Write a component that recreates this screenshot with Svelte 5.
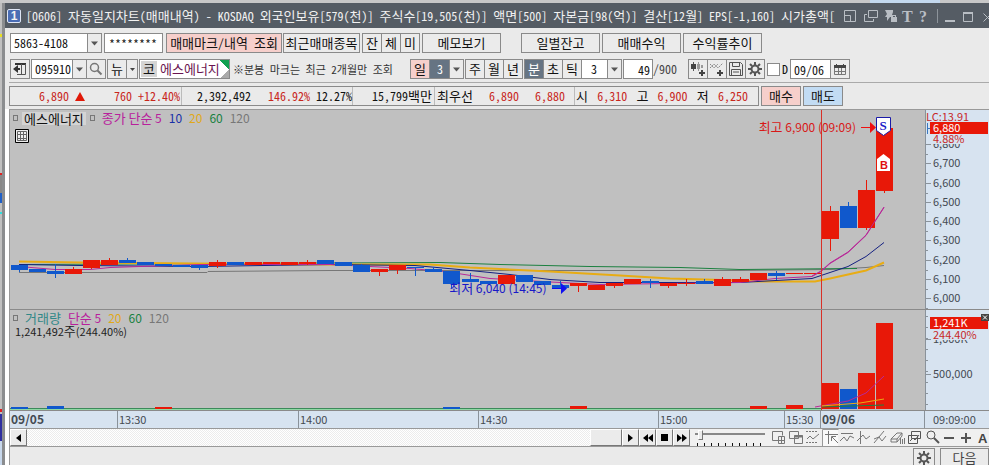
<script lang="ts">
	type Candle = [dir: "up" | "down", top: number, bottom: number, high: number, low: number];

	let account = "5863-4108";
	let password = "********";
	let code = "095910";
	let dayStep = "3";
	let tickStep = "3";
	let count = "49";
	let useDate = false;
	let date = "09/06";
	let speed = 5;

	const title =
		"[0606] 자동일지차트(매매내역) - KOSDAQ 외국인보유[579(천)] 주식수[19,505(천)] 액면[500] 자본금[98(억)] 결산[12월] EPS[-1,160] 시가총액[";

	// body top, body bottom, wick top, wick bottom
	const candles: Candle[] = [
		["down", 265, 270, 265, 272],
		["down", 269, 272, 269, 272],
		["down", 271, 274, 264, 278],
		["up", 269, 274, 267, 274],
		["up", 260, 268, 260, 269],
		["up", 260, 265, 258, 265],
		["down", 260, 263, 258, 263],
		["down", 262, 265, 262, 265],
		["down", 264, 266, 264, 266],
		["down", 265, 267, 265, 267],
		["down", 265, 268, 265, 270],
		["up", 262, 266, 260, 268],
		["down", 262, 265, 262, 265],
		["up", 262, 265, 262, 265],
		["up", 262, 264, 262, 264],
		["up", 262, 265, 262, 265],
		["up", 262, 264, 260, 265],
		["down", 260, 264, 260, 264],
		["down", 262, 266, 262, 266],
		["down", 265, 272, 264, 272],
		["up", 269, 272, 269, 276],
		["up", 265, 270, 265, 274],
		["down", 267, 268, 267, 276],
		["down", 269, 272, 267, 272],
		["down", 271, 284, 271, 288],
		["down", 279, 282, 273, 282],
		["down", 281, 284, 281, 284],
		["up", 275, 284, 275, 284],
		["down", 275, 282, 275, 282],
		["down", 281, 285, 281, 285],
		["down", 285, 288, 281, 288],
		["up", 283, 286, 283, 292],
		["up", 285, 290, 285, 290],
		["up", 283, 286, 283, 288],
		["up", 279, 284, 279, 284],
		["down", 281, 283, 279, 288],
		["up", 283, 286, 283, 288],
		["up", 283, 284, 279, 286],
		["down", 281, 284, 279, 284],
		["up", 279, 286, 277, 286],
		["up", 279, 282, 277, 282],
		["up", 273, 280, 273, 280],
		["down", 273, 276, 271, 280],
		["up", 273, 274, 273, 274],
		["up", 273, 274, 273, 274],
		["up", 211, 239, 206, 251],
		["down", 206, 228, 202, 228],
		["up", 190, 228, 180, 230],
		["up", 128, 191, 128, 193],
	];

	const averages = [
		{
			name: "ma120",
			points: "19,272 207,272 208,271 330,270 740,270 830,269 866,267 884,265",
		},
		{ name: "ma60", points: "19,264 440,262 500,264 590,266 680,267 740,269 857,268" },
		{
			name: "ma20",
			points:
				"19,261 80,262 330,264 430,264 470,267 550,271 620,275 670,278 740,280 758,281 815,281 830,278 848,274 866,270 884,262",
		},
		{
			name: "ma10",
			points:
				"19,264 80,265 200,266 330,264 415,265 470,270 510,274 550,279 600,282 740,282 812,278 830,272 848,266 866,256 884,242",
		},
		{
			name: "ma5",
			points:
				"19,266 55,269 90,269 110,267 200,264 330,264 370,266 410,268 445,271 490,278 560,282 600,284 740,282 775,278 812,276 821,271 830,263 848,252 866,235 884,207",
		},
	];

	const volumes = [
		{ slot: 0, top: 407, dir: "down" },
		{ slot: 2, top: 406, dir: "down" },
		{ slot: 8, top: 407, dir: "up" },
		{ slot: 24, top: 407, dir: "down" },
		{ slot: 31, top: 406, dir: "up" },
		{ slot: 41, top: 406, dir: "up" },
		{ slot: 43, top: 405, dir: "up" },
		{ slot: 45, top: 383, dir: "up" },
		{ slot: 46, top: 389, dir: "down" },
		{ slot: 47, top: 373, dir: "up" },
		{ slot: 48, top: 323, dir: "up" },
	];

	const prices = ["6,800", "6,700", "6,600", "6,500", "6,400", "6,300", "6,200", "6,100", "6,000"];
	const slotX = (i: number) => Math.round(11 + i * 18.02);
	const priceY = (i: number) => Math.round(34 + i * 19.25);
	const split = (text: string) => text.split(/([가-힣]+)/);
</script>

{#snippet mix(text: string)}<span class="mix">{#each split(text) as part, i}{#if i % 2}<span class="ko">{part}</span>{:else}{part}{/if}{/each}</span>{/snippet}

{#snippet arrow()}<svg class="arrow" width="9" height="5" viewBox="0 0 9 5" aria-hidden="true"><path d="M0 0h9L4.500 5z" /></svg>{/snippet}

{#snippet gear()}
	<svg width="14" height="14" viewBox="0 0 14 14" aria-hidden="true">
		<circle cx="7" cy="7" r="3.500" fill="none" stroke="#555" stroke-width="2" />
		<path d="M7 0v3M7 11v3M0 7h3M11 7h3M2 2l2 2M10 10l2 2M12 2l-2 2M4 10l-2 2" stroke="#555" stroke-width="2" />
	</svg>
{/snippet}

<div class="desktop">
	<div class="behind"></div>
	<main>
		<header>
			<span class="badge">1</span>
			<h1>{@render mix(title)}</h1>
			<svg class="window-icons" width="148" height="16" viewBox="0 0 148 16" aria-hidden="true">
				<g fill="none" stroke="#b9bec4">
					<path d="M3.500 2.500h11v11h-11zM3.500 7.500h6v6" />
					<path d="M27.500 2.500h9v7h-9zM26 6.500h-2.500v7h9V11" />
					<path d="M122.500 5.500h9v8h-9z" />
					<path d="M142.500 5.500l8 8M150.500 5.500l-8 8" />
				</g>
				<g fill="#b9bec4">
					<path d="M44 2h8v2l-1 3 1 2h-3l-3 4v-4h-2l2-3z" />
					<path d="M50 9h6v5h-6zM51 9V7h4v2h-1V8h-2v1z" />
					<path d="M104 12h10v2h-10zM122 4h10v2h-10z" />
				</g>
				<path d="M96.500 1v14" stroke="#8d949b" />
				<text x="61" y="14">T</text>
				<text x="78" y="14">?</text>
			</svg>
		</header>

		<div class="toolbar">
			<label class="combo account">
				<select bind:value={account} aria-label="계좌번호"><option>5863-4108</option></select>
				<span class="drop">{@render arrow()}</span>
			</label>
			<input class="password" bind:value={password} aria-label="비밀번호" />
			<button class="mark pink">{@render mix("매매마크/내역 조회")}</button>
			<button class="recent">{@render mix("최근매매종목")}</button>
			<div class="group">
				<button>{@render mix("잔")}</button>
				<button>{@render mix("체")}</button>
				<button>{@render mix("미")}</button>
			</div>
			<button class="wide">{@render mix("메모보기")}</button>
			<button class="wide apart">{@render mix("일별잔고")}</button>
			<button class="wide">{@render mix("매매수익")}</button>
			<button class="wide">{@render mix("수익률추이")}</button>
		</div>

		<div class="toolbar second">
			<button class="square" aria-label="패널">
				<svg width="14" height="14" viewBox="0 0 14 14"><path d="M2 2h11" stroke="#333" stroke-width="2" /><path d="M4 12.500h8.500V2M8.500 2v10" fill="none" stroke="#555" /><path d="M5 3v8L0 7z" fill="#333" /><path d="M5 6h2v2H5z" fill="#333" /></svg>
			</button>
			<div class="group">
				<label class="combo code">
					<select bind:value={code} aria-label="종목코드"><option>095910</option></select>
					<span class="drop">{@render arrow()}</span>
				</label>
				<button class="square" aria-label="검색">
					<svg width="14" height="14" viewBox="0 0 14 14"><circle cx="5.500" cy="5.500" r="4" fill="none" stroke="#777" stroke-width="1.500" /><path d="M8.500 8.500l4 4" stroke="#777" stroke-width="2" /></svg>
				</button>
			</div>
			<div class="group">
				<button class="news">{@render mix("뉴")}</button>
				<button class="mini" aria-label="뉴스 메뉴"><svg width="5" height="3" viewBox="0 0 5 3"><path d="M0 0h5L2.500 3z" fill="#444" /></svg></button>
			</div>
			<div class="stock"><b>{@render mix("코")}</b>{@render mix("에스에너지")}</div>
			<p class="note">※분봉 마크는 최근 2개월만 조회</p>
			<div class="group">
				<button class="pink">{@render mix("일")}</button>
				<label class="combo day">
					<select bind:value={dayStep} aria-label="일 단위"><option>3</option></select>
					<span class="drop">{@render arrow()}</span>
				</label>
			</div>
			<div class="group">
				<button>{@render mix("주")}</button>
				<button>{@render mix("월")}</button>
				<button>{@render mix("년")}</button>
			</div>
			<div class="group">
				<button class="on">{@render mix("분")}</button>
				<button>{@render mix("초")}</button>
				<button>{@render mix("틱")}</button>
				<label class="combo tick">
					<select bind:value={tickStep} aria-label="분 단위"><option>3</option></select>
					<span class="drop">{@render arrow()}</span>
				</label>
			</div>
			<div class="count">
				<input id="count" bind:value={count} /><label for="count">/900</label>
			</div>
			<div class="group tools">
				<button class="square" aria-label="차트 추가">
					<svg width="16" height="16" viewBox="0 0 16 16"><path d="M3.500 1v9" stroke="#555" /><path d="M1 3h5v5H1z" fill="#444" /><path d="M7 3h3v5H7zM11 4h2v3h-2z" fill="#999" /><path d="M8.500 1v9" stroke="#999" /><path d="M9 12h6M12 9v6" stroke="#444" stroke-width="2" /></svg>
				</button>
				<button class="square" aria-label="지표 추가">
					<svg width="16" height="16" viewBox="0 0 16 16"><path d="M1 7l4-4 4 4 5-5M1 3l4 4 4-4" fill="none" stroke="#888" stroke-dasharray="2 1" /><path d="M8 12h6M11 9v6" stroke="#444" stroke-width="2" /></svg>
				</button>
				<button class="square" aria-label="저장">
					<svg width="14" height="14" viewBox="0 0 14 14"><path d="M.5.5h11l2 2v11H.5zM3.500.5v4h7v-4M2.500 13.500v-6h9v6M4 10h6" fill="none" stroke="#555" /></svg>
				</button>
				<button class="square" aria-label="설정">{@render gear()}</button>
			</div>
			<label class="check"><input type="checkbox" bind:checked={useDate} />D</label>
			<div class="group date">
				<input bind:value={date} aria-label="날짜" />
				<button class="square" aria-label="달력">
					<svg width="12" height="11" viewBox="0 0 12 11"><path d="M.5 2.500h11v8H.5zM4.500 4v6M7.500 4v6M1 7.500h10" fill="none" stroke="#777" /><path d="M0 1h12v3H0zM2 0h1v3H2zM9 0h1v3H9z" fill="#444" /></svg>
				</button>
			</div>
		</div>

		<div class="quote">
			<div class="figures">
				<div class="price red"><span>6,890 <svg width="10" height="9" viewBox="0 0 10 9" aria-hidden="true"><path d="M5 0l5 9H0z" fill="#e01808" /></svg></span><span>760 +12.40%</span></div>
				<div class="volume"><span>2,392,492</span><span><span class="red">146.92%</span> 12.27%</span></div>
				<div class="amount">{@render mix("15,799백만")}</div>
				<div class="best">{@render mix("최우선")}<span class="red">6,890</span><span class="red">6,880</span></div>
				<div class="range">{@render mix("시")}<span class="red">6,310</span>{@render mix("고")}<span class="red">6,900</span>{@render mix("저")}<span class="red">6,250</span></div>
			</div>
			<button class="order pink">{@render mix("매수")}</button>
			<button class="order blue">{@render mix("매도")}</button>
		</div>

		<section class="chart">
			<div class="pane price-pane">
				<svg class="plot" viewBox="10 110 915 199" preserveAspectRatio="none" aria-hidden="true">
					<g transform="translate(0 0.5)">
						{#each averages as line}
							<polyline class={line.name} points={line.points} />
						{/each}
					</g>
					{#each candles as [dir, top, bottom, high, low], i}
						<g class={dir}>
							<rect x={slotX(i) + 8} y={high} width="1" height={low - high} />
							<rect x={slotX(i)} y={top} width="17" height={bottom - top} />
						</g>
					{/each}
					<polyline class="ma5" points="812,276 821,271 830,263 848,252 866,235 884,207" />
					<rect class="session" x="821" y="110" width="1" height="199" />
				</svg>
				<div class="legend">
					<i></i><span class="name">{@render mix("에스에너지")}</span><i></i>
					<span class="c5">{@render mix("종가 단순 5")}</span>
					<span class="c10">10</span><span class="c20">20</span><span class="c60">60</span><span class="c120">120</span>
				</div>
				<svg class="grid-icon" width="14" height="14" viewBox="0 0 14 14" aria-hidden="true"><path d="M.5.5h13v13H.5z" fill="#eee" stroke="#000" /><path d="M2.500 2.500h9v9h-9zM5.500 2v10M8.500 2v10M2 5.500h10M2 9.500h10" fill="none" stroke="#666" /></svg>
				<div class="callout highest">{@render mix("최고 6,900 (09:09)")}<svg width="15" height="11" viewBox="0 0 15 11" aria-hidden="true"><path d="M0 5h9V0l6 5.500L9 11V6H0z" /></svg></div>
				<div class="callout lowest">{@render mix("최저 6,040 (14:45)")}<svg width="15" height="11" viewBox="0 0 15 11" aria-hidden="true"><path d="M0 5h9V0l6 5.500L9 11V6H0z" /></svg></div>
				<svg class="flag sell" width="15" height="20" viewBox="0 0 15 20"><path d="M.5.5h14v13l-7 5-7-5z" fill="#fff" stroke="#1a1aa8" /><text x="7" y="13" text-anchor="middle" fill="#1a1ac8">S</text></svg>
				<svg class="flag buy" width="13" height="17" viewBox="0 0 13 17"><path d="M0 17V5l6.500-5L13 5v12z" fill="#fff" /><text x="7" y="15" text-anchor="middle" fill="#e01010">B</text></svg>
			</div>
			<svg class="axis" width="64" height="199" viewBox="0 0 64 199">
				{#each prices as price, i}
					<path d="M0 {priceY(i) + 0.5}h6M0 {priceY(i) + 10.5}h3" stroke="#8a929a" />
					<text x="8" y={priceY(i) + 4}>{price}</text>
				{/each}
				<path d="M.5 0v199" stroke="#8a929a" />
				<rect x="7" y="24" width="57" height="10" fill="#d7e3f0" />
				<text class="alert" x="1" y="11">LC:13.91</text>
				<rect x="5" y="12" width="58" height="12" fill="#e81808" />
				<path d="M2.500 13v11M2 18.500h3" stroke="#3a78c0" />
				<text class="inverse" x="8" y="22">6,880</text>
				<text class="alert" x="8" y="33">4.88%</text>
			</svg>

			<div class="pane volume-pane">
				<svg class="plot" viewBox="10 310 915 100" preserveAspectRatio="none" aria-hidden="true">
					<rect x="10" y="408" width="811" height="1" fill="#3c8a5a" />
					<rect x="10" y="409" width="811" height="1" fill="#8fd8a4" />
					{#each volumes as { slot, top, dir }}
						<rect class={dir} x={slotX(slot)} y={top} width="17" height={409 - top} />
					{/each}
					<polyline class="ma60" points="821,407 884,405" />
					<polyline class="ma5" points="815,407 848,401 866,393 884,376" />
					<polyline class="ma20 thin" points="821,406 860,403 884,399" />
					<rect class="session" x="821" y="310" width="1" height="100" />
				</svg>
				<div class="legend">
					<i></i><span class="teal">{@render mix("거래량")}</span>
					<span class="c5">{@render mix("단순 5")}</span>
					<span class="c20">20</span><span class="c60">60</span><span class="c120">120</span>
				</div>
				<p class="total">{@render mix("1,241,492주(244.40%)")}</p>
			</div>
			<svg class="axis" width="64" height="100" viewBox="0 0 64 100">
				{#each Array(9) as _, i}
					<path d="M0 {6.5 + i * 11}h3" stroke="#8a929a" />
				{/each}
				<path d="M.5 0v100M0 29.500h6M0 64.500h6" stroke="#8a929a" />
				<text x="8" y="33">1,000K</text>
				<text x="8" y="68">500,000</text>
				<rect x="7" y="18" width="57" height="12" fill="#d7e3f0" />
				<rect x="5" y="7" width="58" height="12" fill="#e81808" />
				<text class="inverse" x="8" y="17">1,241K</text>
				<text class="alert" x="8" y="29">244.40%</text>
				<path d="M56 4h8v7h-8z" fill="#444" /><path d="M58 5.500l4 4M62 5.500l-4 4" stroke="#fff" />
			</svg>

			<div class="times">
				<b>09/05</b><span>13:30</span><span>14:00</span><span>14:30</span><span>15:00</span><span>15:30</span><b>09/06</b>
			</div>
			<div class="clock">09:09:00</div>
		</section>

		<div class="player">
			<button aria-label="왼쪽"><svg width="5" height="8" viewBox="0 0 5 8"><path d="M5 0v8L0 4z" /></svg></button>
			<div class="track"><div class="thumb"></div></div>
			<button aria-label="오른쪽"><svg width="5" height="8" viewBox="0 0 5 8"><path d="M0 0v8l5-4z" /></svg></button>
			<button aria-label="뒤로"><svg width="10" height="8" viewBox="0 0 10 8"><path d="M5 0v8L0 4zM10 0v8L5 4z" /></svg></button>
			<button aria-label="정지"><svg width="7" height="7" viewBox="0 0 7 7"><path d="M0 0h7v7H0z" /></svg></button>
			<button aria-label="앞으로"><svg width="10" height="8" viewBox="0 0 10 8"><path d="M0 0v8l5-4zM5 0v8l5-4z" /></svg></button>
			<input class="speed" type="range" min="0" max="100" bind:value={speed} aria-label="속도" />
			<svg class="draw-tools" width="219" height="17" viewBox="770 429 219 17" aria-hidden="true">
				<path d="M822 429h16v17h-16z" fill="#fafafa" /><path d="M822.500 446v-16.500h16" fill="none" stroke="#999" />
				<g fill="none" stroke="#777">
					<path d="M778 440.500h-5.500v-9h10v4M778.500 436.500h6v7h-6zM781.500 436v8M778 440.500h7" />
					<path d="M789.500 431.500h9v7h-9zM794.500 435.500h8v8h-8z" /><path d="M794 436.500h9" stroke-width="2" />
					<path d="M806 431.500h12M806 442.500h12" stroke-dasharray="2 1" /><path d="M807 439l3-3 3 3 6-5" />
					<path d="M828.500 431v13M825 434.500h13M838 443l-6-6M831.500 441v-4.500h4.500" />
					<path d="M841 433.500h12M840 441l4-4 3 4 3-5 4 2" />
					<path d="M860.500 431v13M857 441l6-6 3 4 4-3" />
					<path d="M874 443l10-12M874 439l5-2 3 4 4-5" />
					<path d="M891 439l6-6h5l-5 6zM891 439v3h6v-3M902 433v3l-5 6M900.500 438v6M902.500 439v5M904.500 438v6" />
					<path d="M911.500 431.500h9v7h-9zM908.500 435.500h9v8h-9zM910 441l3-3 2 2 4-5" stroke="#555" />
					<circle cx="931" cy="435" r="4" stroke="#555" /><path d="M934 438l5 5" stroke="#555" stroke-width="2" />
				</g>
				<path d="M944 438h10M961 438h10M966 433v10" stroke="#555" stroke-width="2" />
				<text x="978" y="443">A</text>
			</svg>
		</div>

		<footer>
			<button class="settings" aria-label="설정">{@render gear()}</button>
			<button class="next">{@render mix("다음")}</button>
		</footer>
	</main>
</div>

<style>
	:global(body) {
		overflow: hidden;
		background: #eaeaea;
	}

	.desktop {
		display: grid;
		grid-template-columns: 9px minmax(0, 1fr);
		padding-top: 3px;
		background: linear-gradient(90deg, #c8c8c8 88%, #c3d8ee 88%, #c3d8ee 95%, #c8c8c8 95%);
		font: 12px/16px "Noto Sans Mono CJK KR", "Noto Sans CJK KR", monospace;
		color: #111;
	}

	.behind {
		background:
			linear-gradient(90deg, transparent 2px, #8b8d8f 2px, #8b8d8f 5px, transparent 5px),
			linear-gradient(90deg, transparent 3px, #555c64 3px) 0 0 / 9px 25px no-repeat,
			linear-gradient(90deg, transparent 5px, #eaeaea 5px) 0 0 / 9px 106px no-repeat,
			linear-gradient(90deg, transparent 5px, #fff 5px) 0 106px no-repeat,
			linear-gradient(
				#c0c0c0 31px, #e8e020 31px 34px, #c0c0c0 34px 170px, #e02020 170px 172px, #888 172px 190px,
				#2060c8 190px 200px, #c0c0c0 200px 209px, #30e0e0 209px 211px, #c0c0c0 211px 406px,
				#e02020 406px 409px, #c0c0c0 409px 411px, #3030a0 411px 438px, #c8d8ec 438px
			);
	}

	main {
		min-width: 0;
		background: #eaeaea;
	}

	header {
		display: flex;
		align-items: center;
		height: 25px;
		background: #555c64;
		color: #f2f2f2;
	}

	.badge {
		box-sizing: border-box;
		flex: none;
		width: 14px;
		height: 14px;
		margin-left: -2px;
		border: 1px solid #dfe6f4;
		border-radius: 2px;
		background: #4a6db5;
		font: bold 12px/12px "Liberation Sans", sans-serif;
		text-align: center;
	}

	h1 {
		flex: 1;
		min-width: 0;
		margin: 0 0 0 5px;
		overflow: hidden;
		font: inherit;
		line-height: 24px;
		white-space: pre;
	}

	.window-icons {
		flex: none;
		font: bold 16px "Liberation Serif", serif;
		fill: #b9bec4;
	}

	.mix {
		white-space: pre;
	}

	.ko {
		font-size: 13px;
	}

	button,
	input,
	select {
		box-sizing: border-box;
		height: 20px;
		margin: 0;
		padding: 0;
		border: 1px solid #8a8a8a;
		border-radius: 0;
		background: #ebebeb;
		color: inherit;
		font: inherit;
		line-height: 16px;
		white-space: nowrap;
	}

	button {
		display: flex;
		align-items: center;
		justify-content: center;
		flex: none;
		min-width: 20px;
	}

	input,
	select {
		background: #fff;
		appearance: none;
	}

	.pink {
		background: #f6cfcb;
	}

	.blue {
		background: #c2dcf4;
	}

	.on {
		background: #667483;
		color: #fff;
	}

	.red {
		color: #c8261c;
	}

	.toolbar {
		display: flex;
		gap: 2px;
		padding: 5px 0 0 1px;
	}

	.toolbar.second {
		gap: 1px;
		padding: 6px 0 3px 1px;
		border-bottom: 1px solid #aaa;
	}

	.group {
		display: flex;
		flex: none;
	}

	.group > * + * {
		margin-left: -1px;
	}

	.combo {
		display: flex;
		flex: none;
	}

	.combo select {
		flex: 1;
		min-width: 0;
		padding-left: 3px;
	}

	.drop {
		display: flex;
		align-items: center;
		justify-content: center;
		box-sizing: border-box;
		width: 15px;
		height: 20px;
		margin-left: -1px;
		border: 1px solid #8a8a8a;
		background: #ebebeb;
	}

	.arrow {
		width: 7px;
		fill: #555;
	}

	.account {
		width: 92px;
	}

	.password {
		width: 59px;
		margin-right: 1px;
		padding-left: 4px;
	}

	.mark {
		width: 116px;
	}

	.recent {
		width: 77px;
		margin-left: -1px;
	}

	.wide {
		width: 79px;
	}

	.apart {
		margin-left: 18px;
	}

	.square {
		width: 20px;
	}

	.code {
		width: 56px;
	}

	.news {
		width: 17px;
	}

	.mini {
		min-width: 12px;
		width: 12px;
	}

	.stock {
		box-sizing: border-box;
		display: flex;
		flex: none;
		gap: 3px;
		width: 91px;
		height: 20px;
		padding: 1px;
		border: 1px solid #8a8a8a;
		background: linear-gradient(225deg, #10a050 7px, transparent 7px), linear-gradient(315deg, #aaa 6px, #fff 6px);
		color: #6a1450;
	}

	.stock b {
		width: 16px;
		background: #d4d4d4;
		color: #111;
		font-weight: normal;
		text-align: center;
	}

	.note {
		box-sizing: border-box;
		width: 178px;
		margin: 0;
		padding: 2px 0 0 2px;
		color: #333;
		font-size: 11px;
		white-space: nowrap;
	}

	.day {
		width: 35px;
	}

	.day select {
		padding-left: 7px;
		background: #667483;
		color: #fff;
	}

	.tick {
		width: 41px;
	}

	.tick select {
		padding-left: 9px;
	}

	.count {
		display: flex;
		align-items: center;
		width: 64px;
		color: #444;
	}

	.count input {
		width: 30px;
		padding-right: 2px;
		color: #111;
		text-align: right;
	}

	.check {
		display: flex;
		align-items: center;
		gap: 2px;
		width: 22px;
		margin-left: 1px;
	}

	.check input {
		width: 13px;
		height: 13px;
	}

	.date input {
		width: 41px;
		padding-left: 3px;
	}

	.quote {
		display: flex;
		gap: 2px;
		padding: 3px 0;
	}

	.figures {
		display: flex;
		box-sizing: border-box;
		width: 750px;
		height: 20px;
		border: 1px solid #8a8a8a;
		line-height: 18px;
		white-space: nowrap;
	}

	.figures > div {
		box-sizing: border-box;
		display: flex;
		justify-content: space-between;
		border-right: 1px solid #bbb;
	}

	.figures > div:last-child {
		border: 0;
	}

	.price {
		width: 172px;
		padding: 0 1px 0 29px;
	}

	.volume {
		width: 171px;
		padding-left: 15px;
	}

	.figures > .amount {
		width: 82px;
		justify-content: end;
		padding-right: 2px;
	}

	.best {
		width: 140px;
		padding: 0 9px 0 2px;
	}

	.range {
		flex: 1;
		padding: 0 10px 0 1px;
	}

	.order {
		width: 40px;
	}

	.chart {
		display: grid;
		grid-template-columns: minmax(0, 1fr) 64px;
		border: solid #999;
		border-width: 1px 0 0 1px;
		background: #c0c0c0;
		font-family: "Noto Sans CJK KR", sans-serif;
		font-size: 11px;
	}

	.pane {
		position: relative;
		box-sizing: border-box;
		border-bottom: 1px solid #8a8a8a;
	}

	.price-pane {
		height: 200px;
	}

	.volume-pane {
		height: 101px;
	}

	.plot {
		position: absolute;
		width: 100%;
		height: 100%;
	}

	.up {
		fill: #e81808;
	}

	.down {
		fill: #1058cc;
	}

	polyline {
		fill: none;
		stroke-width: 1;
	}

	.ma5 {
		stroke: #b82898;
	}

	.ma10 {
		stroke: #142080;
	}

	.ma20 {
		stroke: #e8ac14;
		stroke-width: 2;
	}

	.thin {
		stroke-width: 1;
	}

	.ma60 {
		stroke: #1c8040;
	}

	.ma120 {
		stroke: #777;
	}

	.session {
		fill: #d83028;
	}

	.legend {
		position: relative;
		display: flex;
		align-items: center;
		gap: 7px;
		height: 16px;
		padding-left: 3px;
		font-size: 12px;
		white-space: nowrap;
	}

	.legend i {
		box-sizing: border-box;
		width: 5px;
		height: 6px;
		border: 1px solid #777;
	}

	.legend .name {
		margin: 0 -3px;
		padding: 0 2px;
		background: #d4d4d4;
		line-height: 13px;
	}

	.c5 {
		color: #b8209c;
	}

	.c10 {
		color: #1830a8;
	}

	.c20 {
		color: #e0a818;
	}

	.c60 {
		color: #188040;
	}

	.c120 {
		color: #777;
	}

	.teal {
		color: #308888;
	}

	.grid-icon {
		position: absolute;
		left: 5px;
		top: 19px;
	}

	.callout {
		position: absolute;
		display: flex;
		align-items: center;
		gap: 5px;
		font-size: 12px;
		white-space: pre;
	}

	.highest {
		top: 9px;
		right: 49px;
		color: #d81818;
		fill: #f01010;
	}

	.lowest {
		top: 170px;
		left: 48%;
		color: #1818c8;
		fill: #1010f0;
	}

	.flag {
		position: absolute;
		font: bold 13px "Liberation Serif", serif;
	}

	.sell {
		top: 7px;
		right: 34px;
	}

	.buy {
		top: 44px;
		right: 35px;
		font: bold 11px "Liberation Sans", sans-serif;
	}

	.total {
		position: relative;
		margin: -3px 0 0 5px;
		color: #222;
	}

	.axis {
		display: block;
		box-sizing: border-box;
		height: 100%;
		border-bottom: 1px solid #8a8a8a;
		background: #d7e3f0;
		fill: #444a52;
	}

	.axis .alert {
		fill: #c82828;
	}

	.axis .inverse {
		fill: #fff;
	}

	.times {
		display: grid;
		grid-template-columns: 108fr 181fr 180fr 180fr 126fr 36fr 104fr;
		height: 17px;
		background: #d7e3f0;
		color: #444a52;
		white-space: nowrap;
	}

	.times > * {
		min-width: 0;
		padding-left: 1px;
		border-right: 1px solid #8a929a;
	}

	.times b {
		font-size: 12px;
	}

	.clock {
		padding-left: 8px;
		background: #d7e3f0;
		color: #444a52;
	}

	.player {
		display: flex;
		height: 17px;
		border: solid #999;
		border-width: 1px 0 1px 1px;
		background: #f0f0f0;
	}

	.player button {
		min-width: 17px;
		height: 17px;
		border: 1px solid;
		border-color: #fff #777 #777 #fff;
	}

	.track {
		display: flex;
		justify-content: end;
		flex: 1;
		background: repeating-conic-gradient(#fff 0 25%, #ececec 0 50%) 0 0 / 2px 2px;
	}

	.thumb {
		box-sizing: border-box;
		width: 32px;
		border: 1px solid;
		border-color: #fff #777 #777 #fff;
		background: #ebebeb;
	}

	.speed {
		width: 70px;
		height: 17px;
		margin: 0 5px;
		border: 0;
		background:
			linear-gradient(#888, #888) 0 4px / 100% 2px no-repeat,
			repeating-linear-gradient(90deg, #111 0 1px, transparent 1px 7px) 2px 14px / 100% 3px no-repeat;
	}

	.speed::-webkit-slider-thumb {
		width: 5px;
		height: 10px;
		margin-top: -5px;
		border: 1px solid;
		border-color: #fff #777 #777 #fff;
		background: #ebebeb;
		appearance: none;
	}

	.draw-tools {
		flex: none;
		font: bold 13px "Liberation Sans", sans-serif;
		fill: #444;
	}

	footer {
		display: flex;
		justify-content: end;
		gap: 5px;
		height: 18px;
		padding-top: 1px;
		overflow: hidden;
		border-left: 1px solid #999;
		color: #444;
	}

	.settings {
		width: 22px;
	}

	.next {
		width: 49px;
	}
</style>
